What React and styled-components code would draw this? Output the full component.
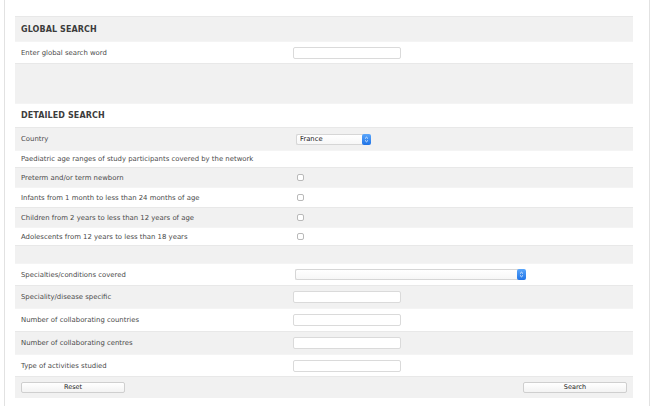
import React from "react";
import styled, { createGlobalStyle } from "styled-components";

const GlobalStyle = createGlobalStyle`
  html, body {
    margin: 0;
    padding: 0;
    background: #ffffff;
  }
  body {
    font-family: "DejaVu Sans", Verdana, sans-serif;
    color: #444444;
    -webkit-font-smoothing: antialiased;
  }
`;

const Page = styled.div`
  width: 653px;
  height: 406px;
  box-sizing: border-box;
  padding: 0 3px 0 4px;
  overflow: hidden;
`;

const Frame = styled.div`
  height: 100%;
  box-sizing: border-box;
  border-left: 1px solid #e2e2e2;
  border-right: 1px solid #e2e2e2;
  padding: 16px 15px 0 10px;
`;

const Table = styled.div`
  display: flex;
  flex-direction: column;
  width: 618px;
`;

const Row = styled.div`
  display: grid;
  grid-template-columns: 278px 1fr;
  align-items: center;
  box-sizing: border-box;
  height: ${(p) => p.$h || 23}px;
  background: ${(p) => (p.$alt ? "#f1f1f1" : "#ffffff")};
  border-top: 1px solid ${(p) => (p.$alt ? "#e8e8e8" : "#f4f4f4")};
`;

const Spacer = styled.div`
  height: ${(p) => p.$h}px;
  background: #f1f1f1;
  border-top: 1px solid #e8e8e8;
  box-sizing: border-box;
`;

const Heading = styled.div`
  grid-column: 1 / 3;
  padding-left: 6px;
  font-size: 8px;
  font-weight: bold;
  color: #3c3c3c;
  letter-spacing: 0.1px;
`;

const Label = styled.div`
  padding-left: 6px;
  font-size: 6.9px;
  color: #4a4a4a;
  white-space: nowrap;
  grid-column: ${(p) => (p.$wide ? "1 / 3" : "auto")};
`;

const Cell = styled.div`
  display: flex;
  align-items: center;
  justify-content: ${(p) => (p.$end ? "flex-end" : "flex-start")};
  padding-left: ${(p) => (p.$start ? "6px" : "0")};
  padding-right: ${(p) => (p.$end ? "6px" : "0")};
`;

const TextInput = styled.input`
  width: 108px;
  height: 12px;
  box-sizing: border-box;
  margin: 0;
  padding: 0 3px;
  border: 1px solid #dadada;
  border-radius: 2px;
  background: #ffffff;
  font-size: 7px;
  outline: none;
`;

const SelectBox = styled.div`
  display: flex;
  align-items: center;
  width: ${(p) => p.$w}px;
  height: 11px;
  margin-left: ${(p) => p.$ml || 0}px;
  box-sizing: border-box;
  border: 1px solid #d6d6d6;
  border-right: none;
  border-radius: 2px;
  background: linear-gradient(#ffffff, #f7f7f7);
  font-size: 6.8px;
  color: #222222;
`;

const SelectText = styled.span`
  flex: 1;
  padding-left: 3px;
`;

const Stepper = styled.span`
  display: flex;
  align-items: center;
  justify-content: center;
  width: 9px;
  height: 11px;
  margin-right: -1px;
  border-radius: 2px;
  background: linear-gradient(#5aa6fb, #1f73e6);
`;

const Check = styled.span`
  display: block;
  width: 7px;
  height: 7px;
  margin-left: 4px;
  box-sizing: border-box;
  border: 1px solid #b9b9b9;
  border-radius: 2px;
  background: #ffffff;
`;

const Button = styled.button`
  width: 104px;
  height: 11px;
  margin: 0;
  padding: 0;
  box-sizing: border-box;
  border: 1px solid #cfcfcf;
  border-radius: 2px;
  background: linear-gradient(#ffffff, #f3f3f3);
  font-family: "DejaVu Sans", Verdana, sans-serif;
  font-size: 6.5px;
  color: #222222;
  line-height: 9px;
`;

const Updown = () => (
  <svg width="5" height="7" viewBox="0 0 5 7">
    <path d="M1 2.6 L2.5 1.2 L4 2.6 M1 4.4 L2.5 5.8 L4 4.4" fill="none" stroke="#ffffff" strokeWidth="0.8" />
  </svg>
);

const Select = ({ w, ml, value }) => (
  <SelectBox $w={w} $ml={ml}>
    <SelectText>{value}</SelectText>
    <Stepper>
      <Updown />
    </Stepper>
  </SelectBox>
);

const ageRanges = [
  ["Preterm and/or term newborn", true, 20],
  ["Infants from 1 month to less than 24 months of age", false, 20],
  ["Children from 2 years to less than 12 years of age", true, 20],
  ["Adolescents from 12 years to less than 18 years", false, 18],
];

const textFields = [
  ["Speciality/disease specific", true, 23],
  ["Number of collaborating countries", false, 23],
  ["Number of collaborating centres", true, 23],
  ["Type of activities studied", false, 22],
];

export default function App() {
  return (
    <>
      <GlobalStyle />
      <Page>
        <Frame>
          <Table>
            <Row $alt $h={25}>
              <Heading>GLOBAL SEARCH</Heading>
            </Row>
            <Row $h={22}>
              <Label>Enter global search word</Label>
              <Cell>
                <TextInput />
              </Cell>
            </Row>
            <Spacer $h={40} />
            <Row $h={24}>
              <Heading>DETAILED SEARCH</Heading>
            </Row>
            <Row $alt $h={23}>
              <Label>Country</Label>
              <Cell>
                <Select w={74} ml={3} value="France" />
              </Cell>
            </Row>
            <Row $h={17}>
              <Label $wide>Paediatric age ranges of study participants covered by the network</Label>
            </Row>
            {ageRanges.map(([label, alt, h]) => (
              <Row key={label} $alt={alt} $h={h}>
                <Label>{label}</Label>
                <Cell>
                  <Check />
                </Cell>
              </Row>
            ))}
            <Spacer $h={18} />
            <Row $h={22}>
              <Label>Specialties/conditions covered</Label>
              <Cell>
                <Select w={230} ml={2} value="" />
              </Cell>
            </Row>
            {textFields.map(([label, alt, h]) => (
              <Row key={label} $alt={alt} $h={h}>
                <Label>{label}</Label>
                <Cell>
                  <TextInput />
                </Cell>
              </Row>
            ))}
            <Row $alt $h={22}>
              <Cell $start>
                <Button>Reset</Button>
              </Cell>
              <Cell $end>
                <Button>Search</Button>
              </Cell>
            </Row>
          </Table>
        </Frame>
      </Page>
    </>
  );
}
